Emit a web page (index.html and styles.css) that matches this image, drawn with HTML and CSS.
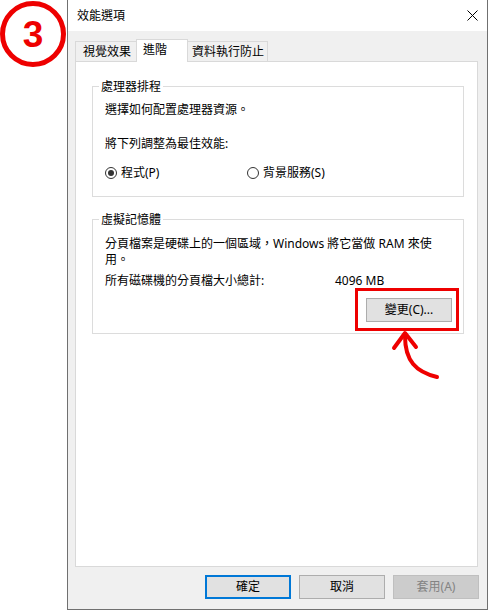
FILE: index.html
```html
<!DOCTYPE html>
<html lang="zh-Hant">
<head>
<meta charset="utf-8">
<link rel="stylesheet" href="styles.css">
</head>
<body>
<div class="badge">3</div>
<div class="window">
  <div class="titlebar">
    <span class="title">效能選項</span>
    <svg class="close" width="11" height="11" viewBox="0 0 11 11"><path d="M0.5 0.5 L10.5 10.5 M10.5 0.5 L0.5 10.5" stroke="#000" stroke-width="1" fill="none"/></svg>
  </div>
  <div class="body">
    <div class="tabs">
      <div class="tab t1">視覺效果</div>
      <div class="tab t2 active">進階</div>
      <div class="tab t3">資料執行防止</div>
    </div>
    <div class="panel">
      <fieldset class="group g1">
        <legend>處理器排程</legend>
        <p class="desc">選擇如何配置處理器資源。</p>
        <p class="sub">將下列調整為最佳效能:</p>
        <div class="radios">
          <label class="radio first"><span class="dot checked"></span>程式(P)</label>
          <label class="radio"><span class="dot"></span>背景服務(S)</label>
        </div>
      </fieldset>
      <fieldset class="group g2">
        <legend>虛擬記憶體</legend>
        <p class="para">分頁檔案是硬碟上的一個區域，Windows 將它當做 RAM 來使<br>用。</p>
        <div class="total"><span class="total-label">所有磁碟機的分頁檔大小總計:</span><span>4096 MB</span></div>
        <div class="change-row"><button class="btn change">變更(C)...</button></div>
      </fieldset>
    </div>
    <div class="buttons">
      <button class="btn default">確定</button>
      <button class="btn">取消</button>
      <button class="btn disabled">套用(A)</button>
    </div>
  </div>
</div>
<div class="highlight"></div>
<svg class="arrow" width="70" height="65" viewBox="0 0 70 65">
  <path d="M57 57 C36 52 25 41 25 16" stroke="#ee0000" stroke-width="4" fill="none" stroke-linecap="round"/>
  <path d="M14 28 L25 13 L36 27" stroke="#ee0000" stroke-width="4" fill="none" stroke-linecap="round" stroke-linejoin="round"/>
</svg>
</body>
</html>
```
FILE: styles.css
```css
html, body {
  margin: 0;
  padding: 0;
}
body {
  width: 488px;
  height: 610px;
  background: #fff;
  position: relative;
  overflow: hidden;
  font-family: "Noto Sans", "Noto Sans CJK TC", sans-serif;
  font-size: 12px;
  color: #000;
}
.badge {
  position: absolute;
  left: 0;
  top: 1px;
  width: 66px;
  height: 66px;
  box-sizing: border-box;
  border: 5px solid #ee0000;
  border-radius: 50%;
  color: #ee0000;
  font-family: "Liberation Sans", Arial, sans-serif;
  font-weight: bold;
  font-size: 37px;
  display: flex;
  align-items: center;
  justify-content: center;
  line-height: 1;
}
.window {
  margin-left: 67px;
  width: 421px;
  height: 610px;
  box-sizing: border-box;
  border: 1px solid #707070;
  border-top: none;
  background: #f0f0f0;
  display: flex;
  flex-direction: column;
}
.titlebar {
  height: 31px;
  flex: none;
  background: #fff;
  display: flex;
  align-items: center;
  justify-content: space-between;
  padding: 0 9px 0 9px;
}
.title {
  line-height: 16px;
}
.close {
  display: block;
}
.body {
  flex: 1;
  display: flex;
  flex-direction: column;
  padding: 8px 9px 10px 7px;
  min-height: 0;
}
.tabs {
  display: flex;
  align-items: flex-end;
  height: 22px;
  flex: none;
  position: relative;
  z-index: 1;
}
.tab {
  box-sizing: border-box;
  height: 20px;
  border: 1px solid #d9d9d9;
  border-bottom: none;
  line-height: 19px;
  white-space: nowrap;
  background: #f0f0f0;
}
.t1 { width: 62px; padding-left: 7px; }
.t2 { width: 52px; padding-left: 6px; margin-left: -1px; }
.t3 { width: 81px; padding-left: 4px; margin-left: -1px; }
.tab.active {
  height: 23px;
  margin-bottom: -1px;
  background: #fff;
  position: relative;
  z-index: 2;
}
.panel {
  flex: 1;
  background: #fff;
  border: 1px solid #d9d9d9;
  padding: 16px 13px 0 16px;
  min-height: 0;
}
.group {
  margin: 0;
  width: 372px;
  box-sizing: border-box;
  border: 1px solid #dcdcdc;
  padding: 0 11px 15px 12px;
  min-width: 0;
}
.group legend {
  padding: 1px 2px 0;
  margin-left: -6px;
  line-height: 16px;
}
.group p {
  margin: 0;
  line-height: 16px;
}
.g1 .desc { margin-top: 7px; }
.g1 .sub { margin-top: 18px; }
.radios {
  display: flex;
  margin-top: 13px;
  height: 16px;
  align-items: center;
}
.radio {
  display: flex;
  align-items: center;
  line-height: 16px;
}
.radio.first { width: 142px; }
.dot {
  width: 12px;
  height: 12px;
  box-sizing: border-box;
  border: 1px solid #333;
  border-radius: 50%;
  margin-right: 4px;
  display: flex;
  align-items: center;
  justify-content: center;
}
.dot.checked::after {
  content: "";
  width: 6px;
  height: 6px;
  border-radius: 50%;
  background: #333;
}
.g2 {
  margin-top: 14px;
  padding-bottom: 11px;
}
.g2 .para {
  margin-top: 8px;
  line-height: 16px;
}
.total {
  display: flex;
  margin-top: 5px;
  line-height: 16px;
}
.total-label { width: 230px; }
.change-row {
  display: flex;
  justify-content: flex-end;
  margin-top: 9px;
}
.btn {
  font-family: inherit;
  font-size: 12px;
  color: #000;
  width: 86px;
  height: 24px;
  box-sizing: border-box;
  background: #e1e1e1;
  border: 1px solid #adadad;
  padding: 0;
  line-height: 20px;
}
.btn.default {
  border: 2px solid #0078d7;
}
.btn.disabled {
  background: #cccccc;
  border-color: #bfbfbf;
  color: #838383;
}
.buttons {
  flex: none;
  display: flex;
  justify-content: flex-end;
  gap: 8px;
  margin-top: 8px;
  margin-right: -1px;
}
.highlight {
  position: absolute;
  left: 355px;
  top: 288px;
  width: 104px;
  height: 43px;
  box-sizing: border-box;
  border: 3px solid #ee0000;
}
.arrow {
  position: absolute;
  left: 380px;
  top: 320px;
}
```
